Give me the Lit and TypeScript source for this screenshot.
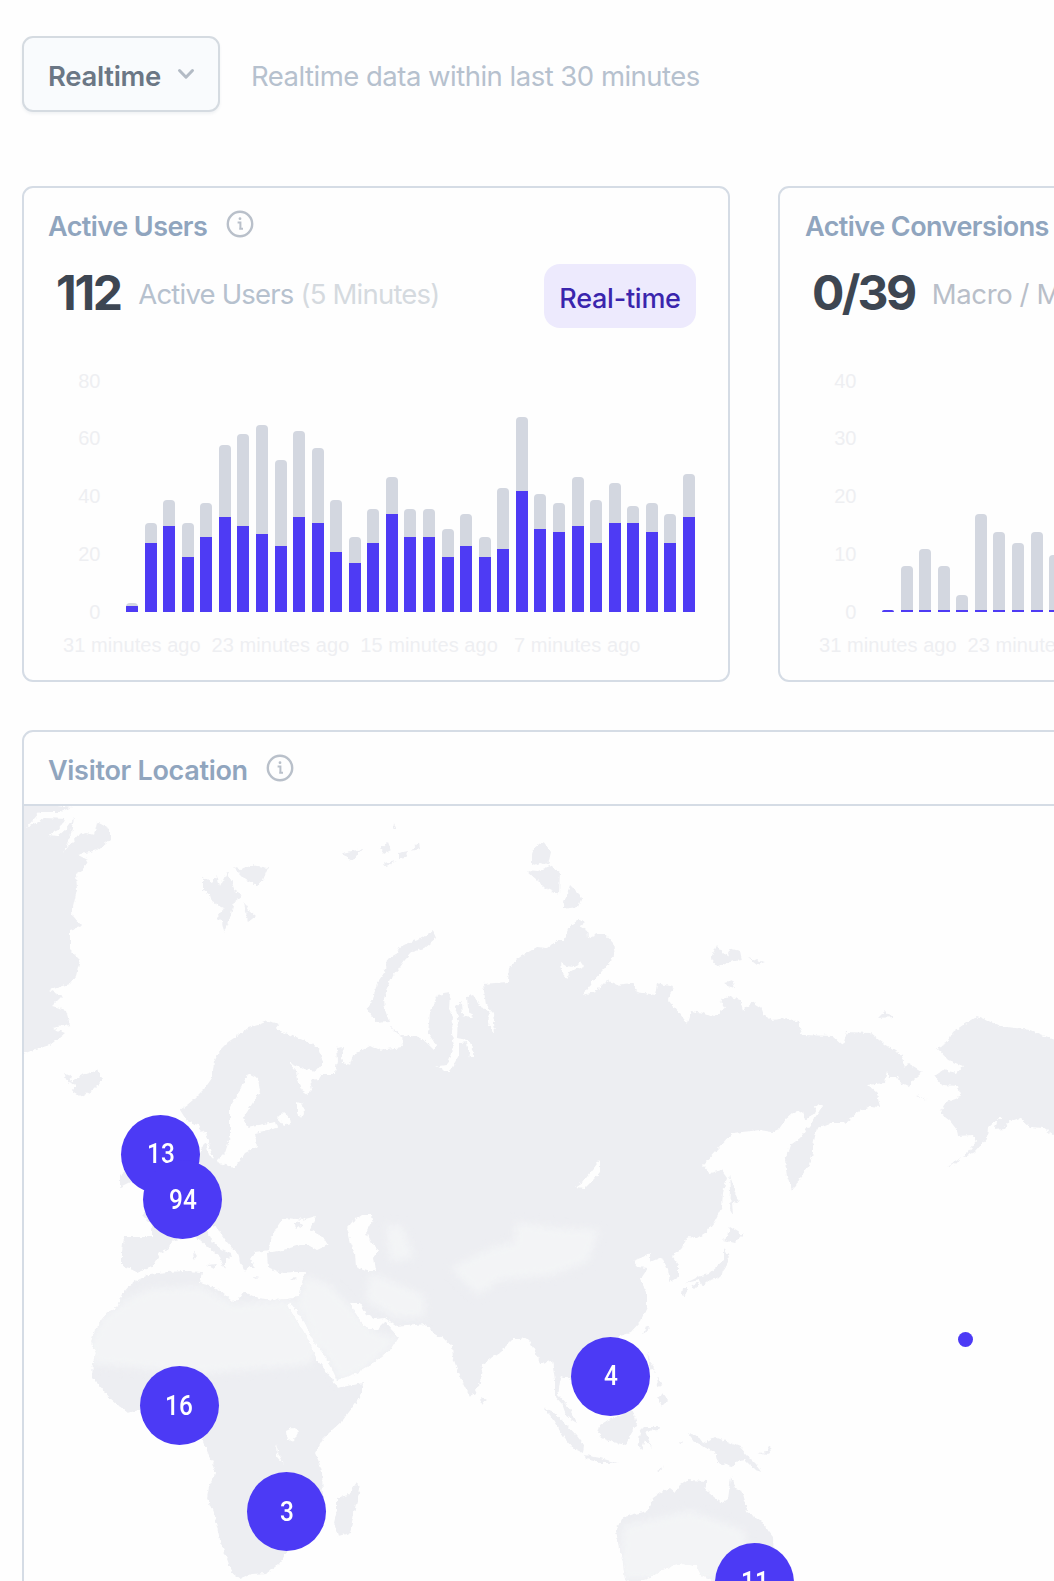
import { LitElement, html, css, svg } from "lit";
import { customElement, property } from "lit/decorators.js";
import { styleMap } from "lit/directives/style-map.js";

type Bar = [dark: number, total: number];

const USERS: Bar[] = [
  [2, 3], [24, 31], [30, 39], [19, 31], [26, 38], [33, 58], [30, 62], [27, 65],
  [23, 53], [33, 63], [31, 57], [21, 39], [17, 26], [24, 36], [34, 47], [26, 36],
  [26, 36], [19, 29], [23, 34], [19, 26], [22, 43], [42, 68], [29, 41], [28, 38],
  [30, 47], [24, 39], [31, 45], [31, 37], [28, 38], [24, 34], [33, 48],
];

const CONVERSIONS: Bar[] = [
  [0, 0], [0, 8], [0, 11], [0, 8], [0, 3], [0, 17], [0, 14], [0, 12], [0, 14], [0, 10],
  [0, 9], [0, 12], [0, 7], [0, 10], [0, 13], [0, 8], [0, 6], [0, 11], [0, 9], [0, 5],
  [0, 12], [0, 15], [0, 10], [0, 8], [0, 11], [0, 9], [0, 7], [0, 10], [0, 12], [0, 6], [0, 9],
];

const PINS: { x: number; y: number; n: string }[] = [
  { x: 160.5, y: 1154, n: "13" },
  { x: 182.5, y: 1199.5, n: "94" },
  { x: 179, y: 1405.5, n: "16" },
  { x: 286.5, y: 1511.5, n: "3" },
  { x: 610.5, y: 1376, n: "4" },
  { x: 754.5, y: 1582, n: "11" },
];

const MAP_X = 24;
const MAP_Y = 806;

const OLD_WORLD =
  "180,1110 187,1105 193,1100 200,1093 205,1088 212,1078 214,1062 220,1050 228,1042 240,1034 248,1028 258,1025 268,1021 280,1024 276,1029 290,1035 308,1042 318,1048 323,1063 316,1071 305,1069 288,1062 296,1071 297,1080 302,1090 308,1094 312,1090 310,1080 319,1079 322,1074 335,1074 337,1060 336,1048 344,1047 341,1058 343,1063 350,1065 353,1055 370,1046 378,1050 403,1047 402,1035 420,1037 428,1044 434,1050 436,1045 428,1033 430,1013 434,1004 437,995 450,993 449,1010 453,1017 452,1033 454,1048 447,1065 440,1066 435,1065 445,1071 450,1071 459,1055 459,1043 467,1042 470,1057 475,1057 472,1045 467,1040 457,1038 458,1017 455,1007 462,1002 463,1015 473,1018 468,1008 467,997 473,995 482,1008 490,1012 488,1023 495,1033 493,1013 486,1005 483,984 508,982 509,968 520,957 537,947 547,948 558,940 565,940 568,928 578,920 585,922 580,926 587,930 588,938 597,934 605,934 613,943 615,955 603,970 592,982 583,995 595,992 607,980 617,985 632,983 637,992 655,995 657,983 673,987 668,1000 680,1014 687,1023 691,1011 703,1013 713,1017 725,1008 720,1000 728,996 740,1000 743,1010 752,1002 760,1007 763,1015 772,1020 787,1018 798,1022 803,1035 833,1036 843,1045 847,1032 870,1033 888,1047 902,1055 904,1068 908,1063 923,1072 913,1080 909,1087 900,1083 897,1077 890,1077 887,1071 884,1083 868,1085 877,1093 880,1107 870,1106 857,1113 845,1123 830,1123 817,1128 813,1145 813,1153 808,1167 800,1178 796,1186 792,1190 787,1177 785,1160 790,1145 800,1138 812,1122 818,1113 823,1106 815,1105 816,1112 805,1120 803,1111 793,1113 785,1120 779,1129 772,1132 760,1130 733,1133 718,1149 703,1165 710,1173 722,1170 727,1177 723,1193 722,1207 714,1222 705,1233 697,1238 688,1237 682,1247 672,1257 678,1265 678,1277 670,1282 668,1270 662,1257 650,1262 650,1253 643,1257 633,1261 638,1267 648,1268 640,1280 647,1292 647,1307 640,1322 630,1333 620,1336 606,1345 600,1376 580,1380 571,1380 562,1376 560,1382 558,1395 567,1405 573,1414 577,1423 567,1417 562,1404 555,1396 555,1380 552,1360 547,1361 540,1364 538,1357 527,1337 520,1339 513,1339 500,1352 491,1358 482,1365 480,1383 475,1393 470,1396 463,1383 457,1369 453,1357 452,1346 443,1338 436,1335 425,1324 397,1327 385,1318 375,1319 366,1314 360,1303 350,1303 356,1314 363,1325 370,1329 378,1329 385,1322 398,1337 390,1350 370,1365 357,1373 337,1380 331,1366 322,1352 313,1340 306,1325 298,1313 290,1302 288,1306 293,1315 300,1326 307,1337 317,1360 332,1378 337,1388 363,1383 360,1397 352,1408 343,1420 330,1432 322,1440 315,1453 319,1462 322,1472 323,1497 310,1512 298,1530 287,1552 279,1564 267,1573 252,1574 240,1579 232,1573 226,1556 220,1540 215,1517 207,1498 209,1487 215,1473 212,1462 208,1453 203,1442 203,1434 190,1420 168,1411 139,1410 128,1413 118,1405 110,1398 98,1384 92,1378 93,1362 96,1353 91,1342 95,1330 103,1318 110,1310 118,1306 123,1293 130,1285 138,1280 150,1274 167,1272 185,1271 202,1272 200,1283 210,1286 220,1291 233,1302 238,1300 243,1292 258,1298 273,1300 288,1299 298,1297 301,1286 305,1272 293,1272 280,1273 268,1267 267,1253 283,1250 300,1245 308,1245 317,1250 328,1245 323,1237 310,1230 313,1223 316,1216 302,1220 297,1219 283,1218 275,1230 270,1242 269,1250 255,1252 250,1259 255,1268 249,1266 245,1272 240,1262 238,1253 232,1248 227,1242 220,1232 215,1225 206,1228 213,1242 222,1250 231,1254 232,1258 225,1257 225,1270 220,1257 208,1247 200,1240 194,1236 187,1237 172,1241 167,1250 160,1253 152,1267 137,1273 133,1269 122,1266 122,1252 124,1237 152,1237 152,1225 142,1215 162,1190 182,1175 199,1163 201,1148 206,1143 209,1155 218,1163 226,1165 233,1168 240,1161 245,1153 257,1147 255,1133 277,1128 275,1122 247,1127 244,1117 252,1104 260,1091 258,1079 248,1074 242,1087 230,1107 230,1120 230,1137 225,1153 215,1163 211,1152 203,1133 198,1125 187,1121";

const LAND: string[] = [
  OLD_WORLD,
  // Greenland
  "20,800 72,807 60,812 40,812 26,828 45,818 66,819 58,830 48,835 58,836 66,829 74,818 70,838 63,853 78,835 86,833 94,835 97,822 110,829 110,840 97,850 78,855 88,860 83,870 76,874 77,890 73,907 72,915 82,926 70,930 70,950 80,960 76,976 70,984 50,990 62,996 52,1006 66,1010 70,1025 52,1028 65,1033 50,1045 36,1049 20,1055",
  // Iceland
  "64,1074 72,1076 70,1082 82,1075 98,1070 103,1080 92,1091 82,1097 72,1091 76,1085 68,1082",
  // Svalbard
  "203,877 212,882 217,875 220,886 227,872 233,884 234,890 243,895 234,902 230,918 224,932 222,922 217,917 224,908 212,902 210,895 203,890",
  "233,867 240,869 253,865 268,868 263,880 257,885 246,880",
  "244,902 249,910 256,916 248,922",
  // Franz Josef Land
  "342,853 362,849 352,861 346,857", "380,849 388,842 391,850 384,854", "399,853 408,851 405,858 399,859",
  "411,851 419,842 420,849", "384,863 398,861 386,866", "393,829 394,823 396,828",
  // Severnaya Zemlya
  "543,841 551,852 548,865 540,863 532,866 532,856 533,849", "538,871 550,866 560,872 559,895 545,888 538,881 526,870",
  "570,885 582,897 578,907 562,909",
  // Novaya Zemlya
  "433,931 436,938 424,948 412,952 405,960 398,970 392,977 387,988 384,999 385,1010 389,1021 376,1022 367,1009 373,999 377,983 384,973 387,960 396,955 400,947 408,943 423,938",
  "390,1026 400,1034 404,1038 396,1033",
  // New Siberian islands, Wrangel
  "717,945 723,953 730,957 728,948 740,951 742,960 730,962 718,967 711,959", "748,958 765,962 757,965", "725,982 732,980 735,988 727,986", "878,1018 885,1011 893,1017",
  // Alaska
  "977,1016 963,1025 953,1032 947,1043 937,1048 948,1060 963,1066 957,1073 943,1070 934,1076 942,1085 958,1086 961,1097 947,1102 940,1113 950,1121 957,1130 958,1136 973,1135 976,1142 963,1158 975,1152 987,1138 988,1128 1000,1117 1008,1122 1020,1118 1030,1127 1043,1128 1060,1140 1060,1042 1047,1037 1030,1030 1000,1026",
  "994,1130 998,1119 1010,1119 1004,1129", "946,1167 960,1158 955,1164", "916,1095 927,1100 920,1098",
  // Sakhalin and Japan
  "730,1175 734,1190 739,1203 732,1202 733,1215 730,1210 731,1190", "730,1227 743,1235 735,1243 723,1240 728,1236",
  "724,1248 729,1257 727,1264 723,1270 721,1278 710,1280 702,1286 699,1280 686,1283 698,1277 708,1274 717,1266 724,1260", "682,1288 688,1288 685,1296 681,1295", "690,1286 699,1282 697,1288",
  // Taiwan and the Philippines
  "643,1335 646,1326 649,1328", "647,1352 651,1362 655,1372 650,1368", "658,1399 663,1393 668,1400 662,1406", "657,1378 663,1384 658,1386",
  // Sumatra, Java, Borneo, Sulawesi, Timor
  "543,1408 552,1411 567,1425 577,1436 584,1445 583,1453 573,1448 565,1439 558,1428 550,1415", "585,1455 600,1458 618,1463 600,1463 587,1459",
  "600,1425 608,1420 620,1416 632,1408 637,1424 631,1433 626,1445 612,1442 602,1438 598,1433", "638,1442 641,1430 644,1427 660,1427 659,1430 645,1431 652,1448 645,1440 641,1451", "656,1471 666,1465 659,1471",
  // New Guinea and the Bismarck arc
  "688,1433 698,1436 703,1443 715,1437 728,1442 740,1447 748,1456 756,1464 762,1472 755,1470 745,1460 735,1462 735,1467 718,1463 715,1452 705,1448 694,1441", "758,1453 766,1452 770,1446 771,1452 765,1455", "679,1442 683,1443 680,1444",
  // Australia
  "731,1477 735,1488 742,1490 746,1505 747,1512 760,1520 766,1528 773,1537 775,1581 715,1581 706,1577 700,1574 697,1566 683,1564 672,1566 660,1571 650,1578 633,1583 625,1580 623,1563 619,1548 616,1530 622,1518 634,1514 647,1511 653,1498 663,1491 670,1488 675,1492 681,1484 687,1480 707,1481 704,1489 714,1497 722,1503 728,1499",
  // Madagascar
  "357,1482 360,1489 355,1508 350,1533 338,1536 334,1523 337,1510 337,1498 348,1495",
  // Smaller islands
  "481,1397 486,1400 482,1405", "193,1250 197,1256 194,1260", "207,1265 217,1264 214,1269", "120,1175 129,1168 132,1181 120,1187", "253,1277 261,1278 254,1279", "290,1279 297,1278 293,1281",
];

// Inland waters
const WATER: string[] = [
  "347,1228 353,1221 362,1215 372,1215 373,1220 366,1233 371,1242 378,1249 374,1257 376,1271 367,1271 356,1267 355,1253 351,1243",
  "600,1160 600,1172 594,1179 585,1188 575,1187 583,1182 590,1173",
  "277,1118 283,1112 289,1117 290,1124 284,1126", "297,1102 303,1104 304,1114 301,1119 297,1112",
  "286,1431 292,1428 299,1431 294,1440 287,1441", "276,1445 279,1455 284,1465 277,1457",
  "561,963 566,966 574,967 580,961 584,967 570,971 567,979 563,974",
  "202,1130 206,1133 210,1146 205,1143",
];

// Arid areas, drawn paler than the rest of the land
const PALE: string[] = [
  "90,1340 103,1316 125,1300 150,1288 200,1286 235,1304 290,1298 300,1320 320,1345 310,1365 250,1370 200,1374 90,1364",
  "305,1275 330,1285 350,1305 375,1332 402,1338 365,1370 340,1384 296,1305",
  "515,1222 560,1228 600,1229 588,1262 550,1276 500,1280 478,1296 450,1268 490,1248 515,1242",
  "370,1272 425,1295 425,1318 395,1318 365,1300", "385,1225 402,1225 415,1258 390,1262",
  "622,1526 690,1510 745,1530 750,1580 700,1580 665,1580 620,1580",
];

@customElement("info-icon")
class InfoIcon extends LitElement {
  static styles = css`
    :host { display: block; width: 28px; height: 28px; }
    svg { display: block; }
  `;
  render() {
    return html`<svg width="28" height="28" viewBox="0 0 28 28" fill="none" stroke="#b9c0ca" stroke-width="2.4">
      <circle cx="14" cy="14" r="12.2" />
      <path d="M11.6 12.4h2.800v6M13.2 18.700h3.800" stroke-width="2" />
      <circle cx="14" cy="8.700" r="1.400" fill="#b9c0ca" stroke="none" />
    </svg>`;
  }
}

@customElement("bar-chart")
class BarChart extends LitElement {
  @property({ attribute: false }) bars: Bar[] = [];
  @property({ attribute: false }) ticks: number[] = [];

  static styles = css`
    :host { display: block; font: 20px/24px "Liberation Sans", sans-serif; color: #eeeff2; }
    .plot { display: flex; height: 255px; padding-left: 23px; }
    .ticks { display: flex; flex-direction: column; justify-content: space-between; width: 53px; text-align: right; font-size: 20px; letter-spacing: -0.3px; margin-top: -0.5px; }
    .bars { display: flex; gap: 6.57px; align-items: flex-end; height: 231px; padding: 12px 0 0 26px; box-sizing: content-box; }
    .bar { width: 12px; display: flex; flex-direction: column; justify-content: flex-end; border-radius: 4px 4px 0 0; background: #d3d7e0; overflow: hidden; }
    .active { background: #4e3bf4; min-height: 2px; }
    .times { display: flex; padding: 9px 0 0 39px; }
    .times span { width: 137px; margin-right: 11.6px; text-align: center; white-space: nowrap; letter-spacing: 0.07px; }
    .times span:last-child { margin-right: 0; }
  `;
  render() {
    const unit = 230 / this.ticks[0];
    return html`
      <div class="plot">
        <div class="ticks">${this.ticks.map((t) => html`<span>${t}</span>`)}</div>
        <div class="bars">
          ${this.bars.map(([dark, total]) => html`<div class="bar" style=${styleMap({ height: `${Math.max(2, total * unit)}px` })}>
            <div class="active" style=${styleMap({ height: `${dark * unit}px` })}></div>
          </div>`)}
        </div>
      </div>
      <div class="times">
        <span>31 minutes ago</span><span>23 minutes ago</span><span>15 minutes ago</span><span>7 minutes ago</span>
      </div>`;
  }
}

@customElement("visitor-map")
class VisitorMap extends LitElement {
  static styles = css`
    :host { display: block; position: relative; height: 860px; overflow: hidden; }
    svg { display: block; }
    .pin { position: absolute; width: 79px; height: 79px; margin: -39.5px 0 0 -39.5px; border-radius: 50%; background: #4c3af5; color: #fff; display: flex; align-items: center; justify-content: center; font: 500 28px/1 Roboto, sans-serif; }
    .pin span { transform: scaleX(0.87); }
    .dot { position: absolute; width: 15px; height: 15px; margin: -7.5px 0 0 -7.5px; border-radius: 50%; background: #4c3af5; }
  `;
  render() {
    const at = (x: number, y: number) => styleMap({ left: `${x - MAP_X}px`, top: `${y - MAP_Y}px` });
    return html`
      <svg width="1460" height="860" viewBox="${MAP_X} ${MAP_Y} 1460 860">
        <defs>
          <filter id="coast" x="0" y="0" width="100%" height="100%">
            <feTurbulence type="fractalNoise" baseFrequency="0.25" numOctaves="2" seed="4" result="n" />
            <feDisplacementMap in="SourceGraphic" in2="n" scale="4.5" xChannelSelector="R" yChannelSelector="G" />
          </filter>
          <filter id="soft" x="-20%" y="-20%" width="140%" height="140%"><feGaussianBlur stdDeviation="4" /></filter>
          <clipPath id="land">${LAND.map((p) => svg`<polygon points=${p} />`)}</clipPath>
        </defs>
        <g filter="url(#coast)">
          <g fill="#edeef2">${LAND.map((p) => svg`<polygon points=${p} />`)}</g>
          <g clip-path="url(#land)"><g fill="#f3f4f6" filter="url(#soft)">${PALE.map((p) => svg`<polygon points=${p} />`)}</g></g>
          <g fill="#fefefe">${WATER.map((p) => svg`<polygon points=${p} />`)}</g>
          <polygon fill="#edeef2" points="293,1223 300,1221 303,1225 297,1229" />
        </g>
      </svg>
      ${PINS.map((p) => html`<div class="pin" style=${at(p.x, p.y)}><span>${p.n}</span></div>`)}
      <div class="dot" style=${at(965.5, 1339)}></div>`;
  }
}

@customElement("app-root")
class AppRoot extends LitElement {
  static styles = css`
    :host { display: block; height: 1581px; overflow: hidden; background: #fefefe; font-family: Inter, sans-serif; }
    .page { width: 1464px; padding: 36px 0 0 22px; }
    .top { display: flex; align-items: center; gap: 32px; height: 76px; }
    .select { box-sizing: border-box; display: flex; align-items: center; width: 198px; height: 76px; padding: 4px 22px 0 24px; gap: 16px; border: 2px solid #d5dbe1; border-radius: 11px; background: #f9fbfd; box-shadow: 0 2px 3px rgba(60, 80, 110, 0.07); font-size: 27.5px; font-weight: 600; color: #6b7785; letter-spacing: -0.3px; }
    .select svg { margin-top: -5px; }
    .hint { font-size: 27.5px; letter-spacing: -0.51px; color: #b6c1ce; padding-top: 3px; white-space: nowrap; margin-left: -1px; }
    .cards { display: grid; grid-template-columns: 708px 708px; gap: 48px; padding-top: 74px; }
    .card { box-sizing: border-box; border: 2px solid #d5dce5; border-radius: 11px; height: 496px; overflow: hidden; }
    .title { display: flex; align-items: center; gap: 18.5px; height: 72px; padding-left: 24px; font-size: 27px; font-weight: 600; letter-spacing: -0.55px; color: #90a5be; white-space: nowrap; }
    .title span { padding-top: 4px; }
    .title.long { padding-left: 25px; }
    .stat { box-sizing: border-box; display: flex; align-items: center; height: 69px; padding: 3px 32px 0 32px; }
    .num { font-size: 48px; font-weight: 700; letter-spacing: -2.3px; color: #3d4652; line-height: 58px; margin-top: -6px; }
    .num.wide { letter-spacing: -2.7px; }
    .label { font-size: 27.5px; letter-spacing: -0.8px; color: #b6c1ce; margin-left: 17.5px; flex: 1; white-space: nowrap; margin-top: -4px; }
    .label.gray { color: #b9bfc9; letter-spacing: -0.4px; }
    .label em { font-style: normal; color: #d5dadf; }
    .pill { box-sizing: border-box; width: 152px; height: 64px; flex: none; border-radius: 16px; background: #edeafd; color: #3a25ad; font-size: 27px; font-weight: 500; letter-spacing: -0.25px; display: flex; align-items: center; justify-content: center; padding-top: 4px; }
    bar-chart { padding-top: 40px; }
    .map { margin-top: 48px; width: 1464px; height: 900px; }
    .map .title { height: 72px; border-bottom: 2px solid #d5dce5; letter-spacing: -0.3px; }
  `;
  render() {
    return html`
      <div class="page">
        <div class="top">
          <div class="select">Realtime
            <svg width="18" height="12" viewBox="0 0 18 12" fill="none" stroke="#b3bbc5" stroke-width="3" stroke-linecap="round" stroke-linejoin="round"><path d="M2.5 2.5 9 9.2l6.500-6.700" /></svg>
          </div>
          <div class="hint">Realtime data within last 30 minutes</div>
        </div>
        <div class="cards">
          <section class="card">
            <div class="title"><span>Active Users</span><info-icon></info-icon></div>
            <div class="stat">
              <div class="num">112</div>
              <div class="label">Active Users <em>(5 Minutes)</em></div>
              <div class="pill">Real-time</div>
            </div>
            <bar-chart .bars=${USERS} .ticks=${[80, 60, 40, 20, 0]}></bar-chart>
          </section>
          <section class="card">
            <div class="title long"><span>Active Conversions</span></div>
            <div class="stat">
              <div class="num wide">0/39</div>
              <div class="label gray">Macro / Micro</div>
            </div>
            <bar-chart .bars=${CONVERSIONS} .ticks=${[40, 30, 20, 10, 0]}></bar-chart>
          </section>
        </div>
        <section class="card map">
          <div class="title"><span>Visitor Location</span><info-icon></info-icon></div>
          <visitor-map></visitor-map>
        </section>
      </div>`;
  }
}
